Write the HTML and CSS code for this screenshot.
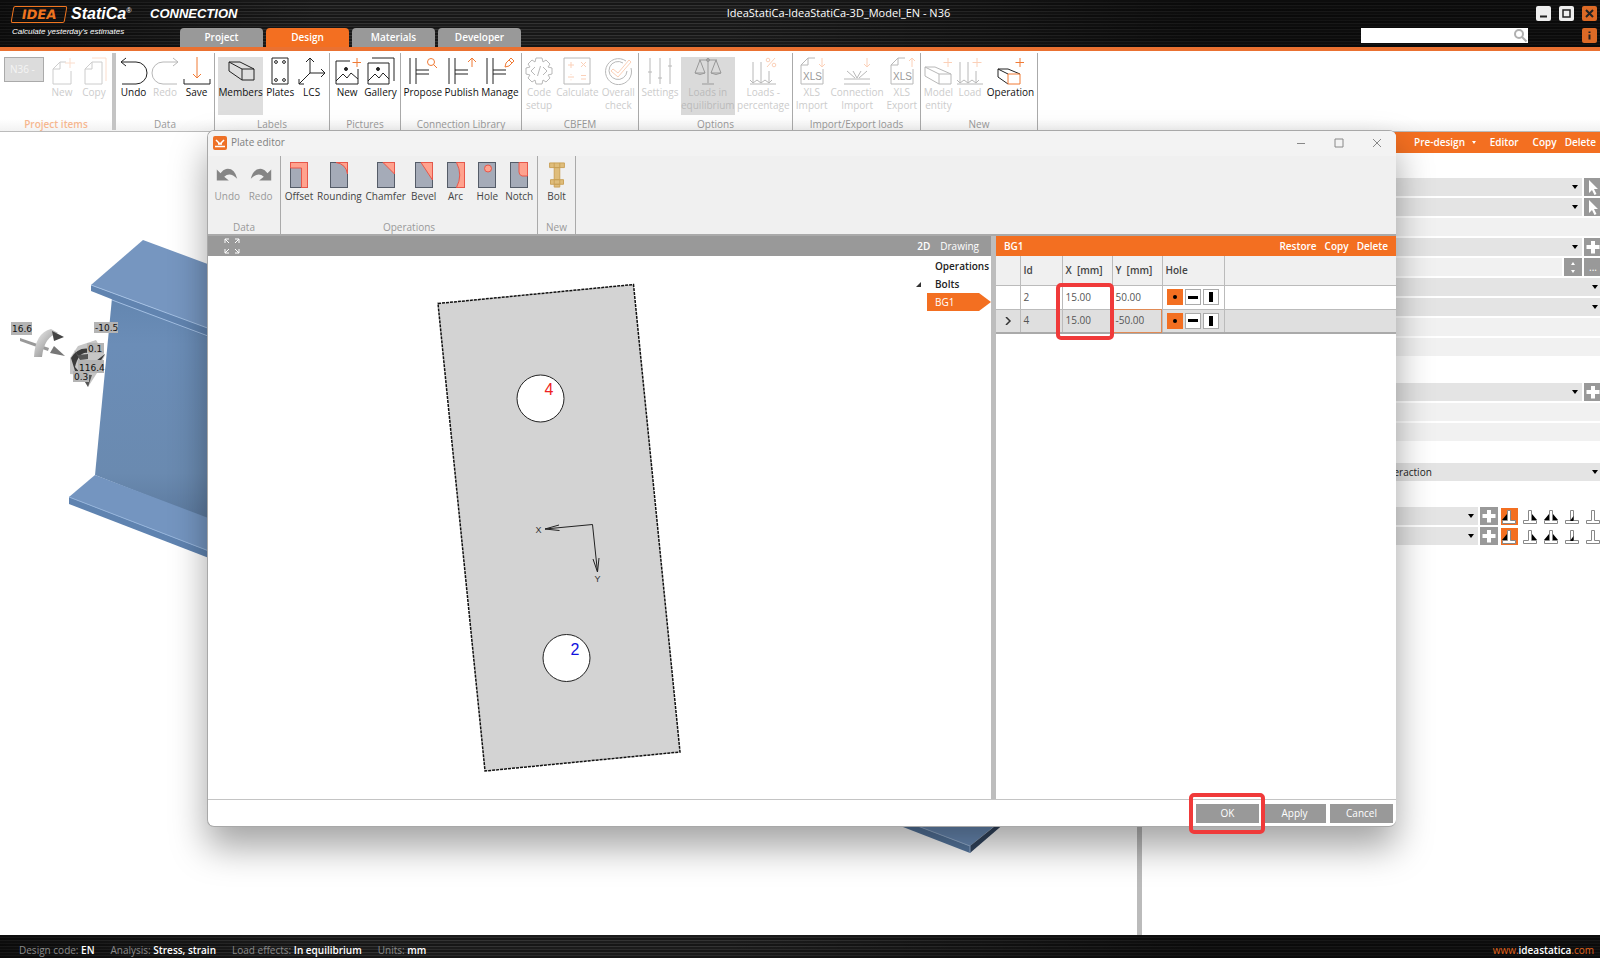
FILE: index.html
```html
<!DOCTYPE html>
<html lang="en">
<head>
    <meta charset="UTF-8">
    <meta name="viewport" content="width=device-width, initial-scale=1.0">
    <title>IDEA StatiCa Connection</title>
    <link rel="stylesheet" href="styles.css">
</head>
<body>
    <!-- icon library -->
    <svg class="defs" aria-hidden="true">
        <symbol id="i-page" viewBox="0 0 28 28"><path d="M18 5H12L5 12V27H23V14M12 5V12H5"/><path class="o" d="M22 1V11M17 6H27"/></symbol>
        <symbol id="i-copy" viewBox="0 0 28 28"><path d="M22 5H12L5 12V27H22ZM12 5V12H5"/><path class="o" d="M12 1H26V24"/></symbol>
        <symbol id="i-undo" viewBox="0 0 28 28"><path d="M1 5H16A11 11 0 0 1 16 27H2M6 1L1 5L6 9"/></symbol>
        <symbol id="i-redo" viewBox="0 0 28 28"><path d="M27 5H12A11 11 0 0 0 12 27H26M22 1L27 5L22 9"/></symbol>
        <symbol id="i-save" viewBox="0 0 28 28"><path d="M1 22V27H27V22"/><path class="o" d="M14 0V21M10 17L14 21L18 17"/></symbol>
        <symbol id="i-member" viewBox="0 0 28 28"><path d="M2 5H13L27 12V23H15L2 14ZM2 5L15 12H27M15 12V23"/></symbol>
        <symbol id="i-plates" viewBox="0 0 28 28"><path d="M6 1H22V27H6Z"/><circle cx="10" cy="5" r="1.4"/><circle cx="18" cy="5" r="1.4"/><circle cx="10" cy="23" r="1.4"/><circle cx="18" cy="23" r="1.4"/></symbol>
        <symbol id="i-lcs" viewBox="0 0 28 28"><path d="M12 1V16H27M12 16L1 27M8 5L12 1L16 5M23 12L27 16L23 20M1 22V27H6"/></symbol>
        <symbol id="i-picture" viewBox="0 0 28 28"><path d="M17 4H3V27H25V12M3 24L10 17L14 21L18 16L25 22"/><circle class="f" cx="13" cy="12" r="1.5"/><path class="o" d="M24 1V10M19.500 5.500H28.500"/></symbol>
        <symbol id="i-gallery" viewBox="0 0 28 28"><path d="M1 6H22V27H1ZM1 24L8 17L12 21L16 16L22 22M5 1H27V24"/><circle class="f" cx="11" cy="12" r="1.500"/></symbol>
        <symbol id="i-propose" viewBox="0 0 28 28"><path d="M1 1V27M7 1V27M7 13H20M7 17H20"/><circle class="o" cx="22" cy="5" r="3.500"/><path class="o" d="M24.500 7.500L28 11"/></symbol>
        <symbol id="i-publish" viewBox="0 0 28 28"><path d="M1 1V27M7 1V27M7 13H20M7 17H20"/><path class="o" d="M24 10V1M20 5L24 1L28 5"/></symbol>
        <symbol id="i-manage" viewBox="0 0 28 28"><path d="M1 1V27M7 1V27M7 13H20M7 17H20"/><path class="o" d="M19 10L20 6L25 1L28 4L23 9ZM23 3L26 6"/></symbol>
        <symbol id="i-code" viewBox="0 0 28 28"><path d="M11 1H17L18 5L21 3L25 7L23 10L27 11V17L23 18L25 21L21 25L18 23L17 27H11L10 23L7 25L3 21L5 18L1 17V11L5 10L3 7L7 3L10 5ZM10 10L6 14L10 18M18 10L22 14L18 18M15.500 9L12.500 19"/></symbol>
        <symbol id="i-calc" viewBox="0 0 28 28"><path d="M1 1H27V27H1Z"/><path class="o" d="M8 5V11M5 8H11M18 5L23 10M23 5L18 10M5 20H11M8 17V17.800M8 22.500V23.300M18 18.500H23M18 22H23"/></symbol>
        <symbol id="i-check" viewBox="0 0 28 28"><path d="M22 4A13 13 0 1 0 27 11M19 6A9 9 0 1 0 23 14"/><path class="o" d="M9 12L14 16L25 3L27 5L14 20L7 14Z"/></symbol>
        <symbol id="i-settings" viewBox="0 0 28 28"><path d="M4 1V27M14 1V27M24 1V27M2 15H6M12 21H16M22 9H26"/></symbol>
        <symbol id="i-scale" viewBox="0 0 28 28"><path d="M14 1V26M8 27H20M5 3H23M6 3L1 16H11ZM22 3L17 16H27ZM1 16Q6 19 11 16M17 16Q22 19 27 16"/><circle cx="14" cy="3" r="1.500"/></symbol>
        <symbol id="i-percent" viewBox="0 0 28 28"><path d="M4 5V26M12 5V26M20 14V26M1 27H27M1 23L4 26L8 23L12 26L16 23L20 26L23 23"/><path class="o" d="M18 10L26 1"/><circle class="o" cx="19" cy="3" r="1.800"/><circle class="o" cx="25" cy="8" r="1.800"/></symbol>
        <symbol id="i-xls-in" viewBox="0 0 28 28"><path d="M17 1H10L3 8V27H25V12M10 1V8H3"/><text x="5" y="23">XLS</text><path class="o" d="M24 1V10M21 7L24 10L27 7"/></symbol>
        <symbol id="i-xls-out" viewBox="0 0 28 28"><path d="M17 1H10L3 8V27H25V12M10 1V8H3"/><text x="5" y="23">XLS</text><path class="o" d="M24 10V1M21 4L24 1L27 4"/></symbol>
        <symbol id="i-joint" viewBox="0 0 28 28"><path d="M1 22H27M1 27H27M4 14L12 21M10 14L14 21L18 14M24 14L16 21"/><path class="o" d="M24 1V10M21 7L24 10L27 7"/></symbol>
        <symbol id="i-entity" viewBox="0 0 28 28"><path d="M1 10H11L27 17V27H15L1 19ZM1 10L15 17H27M15 17V27"/><path class="o" d="M24 1V10M19.500 5.500H28.500"/></symbol>
        <symbol id="i-load" viewBox="0 0 28 28"><path d="M4 5V26M12 5V26M20 14V26M1 27H27M1 23L4 26L8 23L12 26L16 23L20 26L23 23"/><path class="o" d="M21 1V10M16.500 5.500H25.500"/></symbol>
        <symbol id="i-oper" viewBox="0 0 28 28"><path d="M2 12H12L24 17M2 12V20L12 27M2 12L12 17"/><path class="o" d="M12 17H24V27H12ZM24 1V10M19.500 5.500H28.500"/></symbol>

        <symbol id="i-arrow" viewBox="0 0 24 28"><path d="M1 8V20H14L9 16Q15 10 23 18Q20 6 11 7.500Q8 8 5 12Z" fill="#858585"/></symbol>
        <symbol id="i-cursor" viewBox="0 0 18 18"><path d="M5 2V15L8 12L10.500 17L12.500 16L10 11H14Z" fill="#fff"/></symbol>
        <symbol id="i-plus" viewBox="0 0 18 18"><path d="M7 3H11V7H15.500V11H11V15.500H7V11H2.500V7H7Z" fill="#fff"/></symbol>
        <symbol id="w-none" viewBox="0 0 16 16"><path d="M6.500 1.500H9.500V11.500H14.500V14.500H1.500V11.500H6.500Z" fill="#fff" stroke="#888"/></symbol>
        <symbol id="w-left" viewBox="0 0 16 16"><path d="M6 5V11H1Z" fill="#000"/><use href="#w-none"/></symbol>
        <symbol id="w-right" viewBox="0 0 16 16"><path d="M10 5V11H15Z" fill="#000"/><use href="#w-none"/></symbol>
        <symbol id="w-both" viewBox="0 0 16 16"><path d="M10 5V11H15ZM6 5V11H1Z" fill="#000"/><use href="#w-none"/></symbol>
        <symbol id="w-butt" viewBox="0 0 16 16"><use href="#w-none"/><path d="M9.500 7V12H6Z" fill="#000"/></symbol>
    </svg>

    <header class="topbar">
        <div class="brand">
            <div class="logo"><span class="logo-idea">IDEA</span><span class="logo-name">StatiCa<sup>®</sup></span><span class="logo-app">CONNECTION</span></div>
            <div class="tagline">Calculate yesterday's estimates</div>
        </div>
        <nav class="tabs">
            <button>Project</button>
            <button class="active">Design</button>
            <button>Materials</button>
            <button>Developer</button>
        </nav>
        <h1>IdeaStatiCa-IdeaStatiCa-3D_Model_EN - N36</h1>
        <div class="topbar-right">
            <div class="win-buttons">
                <button aria-label="Minimize"><svg viewBox="0 0 15 15"><path d="M4 10.500H11" stroke="#222" stroke-width="2"/></svg></button>
                <button aria-label="Maximize"><svg viewBox="0 0 15 15"><path d="M4 4H11V11H4Z" fill="none" stroke="#222" stroke-width="1.500"/></svg></button>
                <button class="orange" aria-label="Close"><svg viewBox="0 0 15 15"><path d="M4 4L11 11M11 4L4 11" stroke="#222" stroke-width="2"/></svg></button>
            </div>
            <div class="search-row">
                <div class="search">
                    <input type="text" aria-label="Search">
                    <svg viewBox="0 0 15 15"><circle cx="6" cy="6" r="4" fill="none" stroke="#b0b0b0" stroke-width="2"/><path d="M9 9L13.500 13.500" stroke="#b0b0b0" stroke-width="2"/></svg>
                </div>
                <button class="orange" aria-label="Info"><svg viewBox="0 0 15 15"><path d="M6.500 3.500H8.500V5H6.500ZM6.500 6.500H8.500V11.500H6.500Z" fill="#222"/></svg></button>
            </div>
        </div>
    </header>

    <div class="ribbon">
        <section class="group g-project">
            <div class="tools">
                <select class="item-select" aria-label="Project item" disabled><option>N36 -</option></select>
                <button disabled><svg><use href="#i-page"/></svg>New</button>
                <button disabled><svg><use href="#i-copy"/></svg>Copy</button>
            </div>
            <h2>Project items</h2>
        </section>
        <section class="group g-data">
            <div class="tools">
                <button><svg><use href="#i-undo"/></svg>Undo</button>
                <button disabled><svg><use href="#i-redo"/></svg>Redo</button>
                <button><svg><use href="#i-save"/></svg>Save</button>
            </div>
            <h2>Data</h2>
        </section>
        <section class="group g-labels">
            <div class="tools">
                <button class="on"><svg><use href="#i-member"/></svg>Members</button>
                <button><svg><use href="#i-plates"/></svg>Plates</button>
                <button><svg><use href="#i-lcs"/></svg>LCS</button>
            </div>
            <h2>Labels</h2>
        </section>
        <section class="group g-pictures">
            <div class="tools">
                <button><svg><use href="#i-picture"/></svg>New</button>
                <button><svg><use href="#i-gallery"/></svg>Gallery</button>
            </div>
            <h2>Pictures</h2>
        </section>
        <section class="group g-library">
            <div class="tools">
                <button><svg><use href="#i-propose"/></svg>Propose</button>
                <button><svg><use href="#i-publish"/></svg>Publish</button>
                <button><svg><use href="#i-manage"/></svg>Manage</button>
            </div>
            <h2>Connection Library</h2>
        </section>
        <section class="group g-cbfem">
            <div class="tools">
                <button disabled><svg><use href="#i-code"/></svg>Code<br>setup</button>
                <button disabled><svg><use href="#i-calc"/></svg>Calculate</button>
                <button disabled><svg><use href="#i-check"/></svg>Overall<br>check</button>
            </div>
            <h2>CBFEM</h2>
        </section>
        <section class="group g-options">
            <div class="tools">
                <button disabled><svg><use href="#i-settings"/></svg>Settings</button>
                <button class="on" disabled><svg><use href="#i-scale"/></svg>Loads in<br>equilibrium</button>
                <button disabled><svg><use href="#i-percent"/></svg>Loads -<br>percentage</button>
            </div>
            <h2>Options</h2>
        </section>
        <section class="group g-import">
            <div class="tools">
                <button disabled><svg><use href="#i-xls-in"/></svg>XLS<br>Import</button>
                <button disabled><svg><use href="#i-joint"/></svg>Connection<br>Import</button>
                <button disabled><svg><use href="#i-xls-out"/></svg>XLS<br>Export</button>
            </div>
            <h2>Import/Export loads</h2>
        </section>
        <section class="group g-new">
            <div class="tools">
                <button disabled><svg><use href="#i-entity"/></svg>Model<br>entity</button>
                <button disabled><svg><use href="#i-load"/></svg>Load</button>
                <button><svg><use href="#i-oper"/></svg>Operation</button>
            </div>
            <h2>New</h2>
        </section>
    </div>

    <main>
        <!-- 3D view of the joint -->
        <svg class="scene" viewBox="0 132 1137 803" preserveAspectRatio="xMinYMin slice">
            <defs>
                <linearGradient id="web" x1="0" y1="0" x2="0" y2="1">
                    <stop offset="0" stop-color="#6386b0"/>
                    <stop offset=".2" stop-color="#6b8db7"/>
                    <stop offset=".75" stop-color="#6a8ab0"/>
                    <stop offset="1" stop-color="#587599"/>
                </linearGradient>
                <linearGradient id="metal" x1="0" y1="0" x2="1" y2="1">
                    <stop offset="0" stop-color="#f4f4f4"/>
                    <stop offset="1" stop-color="#777"/>
                </linearGradient>
            </defs>
            <path d="M112 298L95 475L240 532V330Z" fill="url(#web)"/>
            <path d="M91 285L240 340V350L91 291Z" fill="#6184b0"/>
            <path d="M143 240L91 285L240 340V276Z" fill="#7696c0"/>
            <path d="M91 285L240 340M112 300L240 348" fill="none" stroke="#a3bfe2"/>
            <path d="M95 475L69 497L240 563V530Z" fill="#7495c0"/>
            <path d="M69 497V504L240 570V563Z" fill="#5f83b0"/>
            <path d="M69 497L240 563" stroke="#94b3da"/>
            <path d="M902 820L970 846L1002 820Z" fill="#6b8db8"/>
            <path d="M885 820L970 853V846L902 820Z" fill="#56779f"/>
            <path d="M970 846L1000 822H1006L970 853Z" fill="#32455f"/>
            <path d="M902 820L970 846V853" fill="none" stroke="#94b0d2"/>

            <path d="M20 338L49 348L48 351L20 341Z" fill="#999"/>
            <path d="M54 346L65 356L50 353Z" fill="#777"/>
            <path d="M34 357Q35 333 51 329L58 333Q44 337 42 357Z" fill="url(#metal)"/>
            <path d="M52 331L64 337L54 341Z" fill="#444"/>
            <path d="M70 358L78 346L96 340L105 355L97 373L88 387L83 375L70 374Z" fill="#c6c6c6"/>
            <path d="M71 358Q78 346 91 349L88 353Q79 351 75 367Q84 379 96 368L105 354L92 364Q80 376 75 371Z" fill="#3b3b3b"/>
            <path d="M74 350L78 355L88 354V359L80 360ZM80 374L92 375L88 387Z" fill="#555"/>
            <g class="force">
                <path d="M11 322H32V335H11ZM94 322H118V333H94ZM87 343H104V353H87ZM78 360H104V373H78ZM73 371H89V382H73Z" fill="#b4b4b4"/>
                <text x="12" y="332">16.6</text>
                <text x="95" y="331">-10.5</text>
                <text x="88" y="352">0.1</text>
                <text x="79" y="371">116.4</text>
                <text x="74" y="380">0.3</text>
            </g>
        </svg>

        <aside class="props">
            <div class="props-head">
                <a href="#">Pre-design <i></i></a>
                <a href="#">Editor</a>
                <a href="#">Copy</a>
                <a href="#">Delete</a>
            </div>
            <form class="props-body">
                <div class="row"><div class="drop"><select aria-label="Member 1"></select></div><button type="button" class="sq" aria-label="Pick"><svg><use href="#i-cursor"/></svg></button></div>
                <div class="row"><div class="drop"><select aria-label="Member 2"></select></div><button type="button" class="sq" aria-label="Pick"><svg><use href="#i-cursor"/></svg></button></div>
                <div class="row"><input type="text" aria-label="Location"></div>
                <div class="row"><div class="drop"><select aria-label="Bolts"></select></div><button type="button" class="sq" aria-label="Add"><svg><use href="#i-plus"/></svg></button></div>
                <div class="row"><input type="text" aria-label="Rows"><button type="button" class="sq spin" aria-label="Step"><i></i><i></i></button><button type="button" class="sq dots">...</button></div>
                <div class="row full"><div class="drop"><select aria-label="Plate"></select></div></div>
                <div class="row full"><div class="drop"><select aria-label="Side"></select></div></div>
                <div class="row"><input type="text" aria-label="Width"></div>
                <div class="row"><input type="text" aria-label="Height"></div>

                <div class="row section"><div class="drop"><select aria-label="Type"></select></div><button type="button" class="sq" aria-label="Add"><svg><use href="#i-plus"/></svg></button></div>
                <div class="row"><input type="text" aria-label="Positions"></div>
                <div class="row"><input type="text" aria-label="Offset"></div>

                <div class="row full section-2"><div class="drop"><select aria-label="Shear force transfer"><option>Interaction</option></select></div></div>

                <div class="row weld section-3">
                    <div class="drop"><select aria-label="Weld 1"></select></div>
                    <button type="button" class="sq" aria-label="Add"><svg><use href="#i-plus"/></svg></button>
                    <div class="welds">
                        <button type="button" class="on" aria-label="Left"><svg><use href="#w-left"/></svg></button>
                        <button type="button" aria-label="Right"><svg><use href="#w-right"/></svg></button>
                        <button type="button" aria-label="Both"><svg><use href="#w-both"/></svg></button>
                        <button type="button" aria-label="Butt"><svg><use href="#w-butt"/></svg></button>
                        <button type="button" aria-label="None"><svg><use href="#w-none"/></svg></button>
                    </div>
                </div>
                <div class="row weld">
                    <div class="drop"><select aria-label="Weld 2"></select></div>
                    <button type="button" class="sq" aria-label="Add"><svg><use href="#i-plus"/></svg></button>
                    <div class="welds">
                        <button type="button" class="on" aria-label="Left"><svg><use href="#w-left"/></svg></button>
                        <button type="button" aria-label="Right"><svg><use href="#w-right"/></svg></button>
                        <button type="button" aria-label="Both"><svg><use href="#w-both"/></svg></button>
                        <button type="button" aria-label="Butt"><svg><use href="#w-butt"/></svg></button>
                        <button type="button" aria-label="None"><svg><use href="#w-none"/></svg></button>
                    </div>
                </div>
            </form>
        </aside>
    </main>

    <footer class="status">
        <span>Design code: <b>EN</b></span>
        <span>Analysis: <b>Stress, strain</b></span>
        <span>Load effects: <b>In equilibrium</b></span>
        <span>Units: <b>mm</b></span>
        <a href="#">www.<b>ideastatica</b>.com</a>
    </footer>

    <!-- plate editor window -->
    <div class="dialog" role="dialog" aria-label="Plate editor">
        <div class="dialog-title">
            <svg class="app-icon" viewBox="0 0 14 14"><rect width="14" height="14" rx="2" fill="#ee7127"/><path d="M2 10.500H12M3 4L7 8L11 4M5 8H9" fill="none" stroke="#fff" stroke-width="1.500"/></svg>
            <span>Plate editor</span>
            <div class="dialog-win">
                <button aria-label="Minimize"><svg viewBox="0 0 10 10"><path d="M1 5.500H9"/></svg></button>
                <button aria-label="Maximize"><svg viewBox="0 0 10 10"><path d="M1 1H9V9H1Z"/></svg></button>
                <button aria-label="Close"><svg viewBox="0 0 10 10"><path d="M1 1L9 9M9 1L1 9"/></svg></button>
            </div>
        </div>

        <div class="edit-ribbon">
            <section class="group e-data">
                <div class="tools">
                    <button disabled><svg><use href="#i-arrow"/></svg>Undo</button>
                    <button disabled><svg class="flip"><use href="#i-arrow"/></svg>Redo</button>
                </div>
                <h2>Data</h2>
            </section>
            <section class="group e-ops">
                <div class="tools">
                    <button><svg viewBox="0 0 18 26"><rect class="p" x=".5" y=".5" width="17" height="25"/><path class="c" d="M.5 .5H17.500V25.500H11.500V6H.5Z"/></svg>Offset</button>
                    <button><svg viewBox="0 0 18 26"><rect class="p" x=".5" y=".5" width="17" height="25"/><path class="c" d="M6 .5H17.500V12Q16 2 6 .5Z"/></svg>Rounding</button>
                    <button><svg viewBox="0 0 18 26"><rect class="p" x=".5" y=".5" width="17" height="25"/><path class="c" d="M6 .5H17.500V12Z"/></svg>Chamfer</button>
                    <button><svg viewBox="0 0 18 26"><rect class="p" x=".5" y=".5" width="17" height="25"/><path class="c" d="M6 .5H17.500V18Z"/></svg>Bevel</button>
                    <button><svg viewBox="0 0 18 26"><rect class="p" x=".5" y=".5" width="17" height="25"/><path class="c" d="M9.500 .5H17.500V25.500H9.500Q16 13 9.500 .5Z"/></svg>Arc</button>
                    <button><svg viewBox="0 0 18 26"><rect class="p" x=".5" y=".5" width="17" height="25"/><circle class="c" cx="10" cy="6.500" r="3.500"/></svg>Hole</button>
                    <button><svg viewBox="0 0 18 26"><rect class="p" x=".5" y=".5" width="17" height="25"/><path class="c" d="M9 .5H17.500V14H12Q9 13 9 10Z"/></svg>Notch</button>
                </div>
                <h2>Operations</h2>
            </section>
            <section class="group e-new">
                <div class="tools">
                    <button><svg viewBox="0 0 18 28"><path d="M1 1H17V6H1ZM6 6H12V19H6ZM2 19H16V24H2ZM6 24H12V27H6Z" fill="#dfbd7b" stroke="#c9a055"/><path d="M6 1V6M12 1V6M6 19V24M12 19V24" stroke="#c9a055"/></svg>Bolt</button>
                </div>
                <h2>New</h2>
            </section>
        </div>

        <div class="dialog-body">
            <div class="view">
                <div class="bar gray">
                    <button class="expand" aria-label="Zoom all"><svg viewBox="0 0 16 16"><path d="M1 5V1H5M1 1L5 5M11 1H15V5M15 1L11 5M1 11V15H5M1 15L5 11M11 15H15V11M15 15L11 11"/></svg></button>
                    <button class="mode"><b>2D</b></button>
                    <button class="mode">Drawing</button>
                </div>
                <div class="view-area">
                    <svg class="plate" viewBox="208 256 782 543" preserveAspectRatio="xMidYMid meet">
                        <path class="outline" d="M437.500 303.500L633 284.500L679.500 752L484.500 771Z"/>
                        <circle cx="540" cy="398.500" r="23.500"/>
                        <circle cx="566" cy="658" r="23.500"/>
                        <path class="axis" d="M544.500 529L592 524.500L597 572M558.500 525L544.500 529L559 530.500M592.500 559L597 572L598.500 558"/>
                        <text class="num red" x="544" y="395">4</text>
                        <text class="num blue" x="570" y="655">2</text>
                        <text class="ax" x="535" y="533">X</text>
                        <text class="ax" x="594" y="582">Y</text>
                    </svg>
                    <ul class="tree">
                        <li>Operations</li>
                        <li class="open">Bolts</li>
                        <li class="leaf"><a href="#">BG1</a></li>
                    </ul>
                </div>
            </div>

            <div class="detail">
                <div class="bar">
                    <b>BG1</b>
                    <div class="bar-links">
                        <a href="#">Restore</a>
                        <a href="#">Copy</a>
                        <a href="#">Delete</a>
                    </div>
                </div>
                <table>
                    <colgroup><col class="c-mark"><col class="c-id"><col class="c-num"><col class="c-num"><col class="c-hole"><col></colgroup>
                    <thead>
                        <tr><th></th><th>Id</th><th>X&nbsp; [mm]</th><th>Y&nbsp; [mm]</th><th>Hole</th><th></th></tr>
                    </thead>
                    <tbody>
                        <tr>
                            <td></td><td>2</td><td class="marked">15.00<span class="callout"></span></td><td>50.00</td>
                            <td><div class="holes"><button class="on" aria-label="Circle"><i class="dot"></i></button><button aria-label="Horizontal slot"><i class="hor"></i></button><button aria-label="Vertical slot"><i class="ver"></i></button></div></td><td></td>
                        </tr>
                        <tr class="current">
                            <td class="mark"><svg viewBox="0 0 8 8"><path d="M2 0L6 4L2 8" fill="none" stroke="#333" stroke-width="1.500"/></svg></td><td>4</td><td>15.00</td><td class="edit">-50.00</td>
                            <td><div class="holes"><button class="on" aria-label="Circle"><i class="dot"></i></button><button aria-label="Horizontal slot"><i class="hor"></i></button><button aria-label="Vertical slot"><i class="ver"></i></button></div></td><td></td>
                        </tr>
                    </tbody>
                </table>
            </div>
        </div>

        <div class="dialog-foot">
            <div class="ok-wrap"><button>OK</button><span class="callout"></span></div>
            <button>Apply</button>
            <button>Cancel</button>
        </div>
    </div>
</body>
</html>
```

FILE: styles.css
```css
* {
    box-sizing: border-box;
}

body {
    --accent: #f07a35;
    margin: 0;
    height: 100vh;
    display: flex;
    flex-direction: column;
    position: relative;
    overflow: hidden;
    background: #fff;
    color: #222;
    font-family: "Open Sans", "Noto Sans", sans-serif;
    font-size: 10px;
    line-height: 13px;
}

button,
input,
select {
    font: inherit;
    color: inherit;
    margin: 0;
    padding: 0;
    border: 0;
    border-radius: 0;
    background: none;
}

a {
    color: inherit;
    text-decoration: none;
}

b,
th {
    font-weight: 600;
}

svg {
    display: block;
}

.defs {
    position: absolute;
    width: 0;
    height: 0;
}

/* top bar */
.topbar,
.status {
    background:
        linear-gradient(90deg, #0008, #0000 20%, #0000 45%, #0008 75%, #0008),
        repeating-linear-gradient(0deg, #161616 0 2px, #2b2b2b 2px 3px, #1b1b1b 3px 5px, #333 5px 6px);
}

.topbar {
    display: flex;
    align-items: flex-end;
    flex: none;
    height: 51px;
    border-bottom: 4px solid #ea7131;
    position: relative;
}

.brand {
    width: 180px;
    align-self: flex-start;
    padding: 5px 0 0 12px;
    color: #fff;
    white-space: nowrap;
    font-family: "Liberation Sans", Arial, sans-serif;
    font-style: italic;
}

.logo {
    display: flex;
    align-items: center;
    height: 18px;
    font-weight: bold;
    line-height: 18px;
}

.logo span {
    flex: none;
}

.logo .logo-idea {
    width: 54px;
    border: 1px solid #f0751f;
    border-radius: 2px;
    transform: skewX(-10deg);
    color: #f0751f;
    font-family: "DejaVu Sans", sans-serif;
    font-size: 13px;
    line-height: 15px;
    text-align: center;
    font-style: normal;
}

.logo-name {
    width: 84px;
    padding-left: 5px;
    font-size: 16px;
}

.logo-name sup {
    font-size: 7px;
    font-weight: normal;
    vertical-align: 6px;
    line-height: 0;
}

.logo-app {
    font-size: 13px;
}

.tagline {
    font-size: 8px;
    line-height: 18px;
}

.tabs {
    display: flex;
    gap: 3px;
}

.tabs button {
    width: 83px;
    height: 19px;
    border-radius: 4px 4px 0 0;
    background: #999;
    color: #fff;
    font-weight: 600;
}

.tabs .active {
    background: #f36f21;
}

.topbar h1 {
    position: absolute;
    inset: 5px 0 auto 77px;
    margin: 0;
    text-align: center;
    color: #fff;
    font-size: 11px;
    line-height: 16px;
    font-weight: normal;
}

.topbar-right {
    display: flex;
    flex-direction: column;
    align-items: flex-end;
    gap: 7px;
    margin-left: auto;
    padding: 0 3px 4px 0;
    position: relative;
}

.win-buttons {
    display: flex;
    gap: 8px;
}

.topbar-right button {
    width: 15px;
    height: 15px;
    border-radius: 2px;
    background: #eee;
}

.topbar-right button.orange {
    background: #dd6a26;
}

.search-row {
    display: flex;
    gap: 54px;
}

.search {
    display: flex;
    width: 167px;
    height: 15px;
    background: #fff;
}

.search input {
    flex: 1;
    min-width: 0;
}

.search svg {
    width: 15px;
}

/* ribbon */
.ribbon {
    display: flex;
    flex: none;
    height: 81px;
    padding: 2px 0 1px;
    border-bottom: 1px solid #bbb;
    background: linear-gradient(#fff 85%, #f2f2f2);
}

.group {
    display: flex;
    flex-direction: column;
    justify-content: space-between;
    border-right: 1px solid #aaa;
}

.tools {
    display: flex;
    justify-content: space-evenly;
    align-items: flex-start;
    padding-top: 4px;
}

.tools button {
    display: flex;
    flex-direction: column;
    align-items: center;
    gap: 1px;
    min-width: 28px;
    color: #111;
    white-space: nowrap;
}

.group h2 {
    margin: 0;
    text-align: center;
    color: #999;
    font-size: 10px;
    line-height: 13px;
    font-weight: normal;
}

.ribbon .group h2 {
    line-height: 11px;
}

.ribbon svg {
    width: 28px;
    height: 28px;
    overflow: visible;
    fill: none;
    stroke: #222;
    stroke-width: 1;
}

.ribbon button:disabled {
    --accent: #fbd0b8;
    color: #ccc;
}

.ribbon button:disabled svg {
    stroke: #b8b8b8;
}

.ribbon .on {
    height: 58px;
    background: #dedede;
}

.ribbon .on:disabled {
    background: #dadada;
    color: #bbb;
}

.ribbon .on:disabled svg {
    stroke: #999;
}

.o {
    stroke: var(--accent);
}

.f {
    fill: #222;
}

symbol text {
    font-family: "Liberation Sans", Arial, sans-serif;
    font-size: 10px;
    fill: #999;
    stroke: none;
}

.g-project { width: 116px; border-right: 4px solid #c4c4c4; }
.g-data { width: 99px; }
.g-labels { width: 115px; }
.g-pictures { width: 71px; }
.g-library { width: 121px; }
.g-cbfem { width: 117px; }
.g-options { width: 154px; }
.g-import { width: 128px; }
.g-new { width: 117px; }

.g-project svg {
    opacity: 0.7;
}

.g-project h2 {
    color: #f6b78f;
    font-weight: 600;
}

.item-select {
    appearance: none;
    width: 40px;
    height: 25px;
    padding-left: 5px;
    border: 1px solid #aaa;
    background: #dcdcdc;
    color: #f4f4f4;
    opacity: 1;
}

/* main area */
main {
    display: flex;
    flex: 1;
    min-height: 0;
}

.scene {
    flex: 1;
    min-width: 0;
    height: 100%;
}

.force text {
    font-family: "DejaVu Sans", sans-serif;
    font-size: 9px;
    fill: #111;
}

.props {
    width: 463px;
    border-left: 5px solid #bbb;
}

.props-head {
    display: flex;
    justify-content: flex-end;
    gap: 8px;
    height: 21px;
    padding-right: 4px;
    background: #f36f21;
    color: #fff;
    font-weight: 600;
    line-height: 21px;
}

.props-head a:nth-child(-n+2) {
    margin-right: 6px;
}

.props-head i,
.drop::after,
.spin i {
    display: inline-block;
    border: 3px solid transparent;
    border-top: 4px solid;
    border-bottom: 0;
}

.props-head i {
    border-width: 3px 2px 0;
    margin: 0 0 2px 4px;
}

.props-body {
    display: flex;
    flex-direction: column;
    gap: 2px;
    padding: 25px 0 0 239px;
}

.row {
    display: flex;
    gap: 2px;
    height: 18px;
    margin-right: -2px;
}

.row > input {
    flex: 1;
    min-width: 0;
    background: #f1f1f1;
}

.drop {
    flex: 1;
    position: relative;
}

.drop select {
    appearance: none;
    width: 100%;
    height: 18px;
    background: #e4e4e4;
}

.drop::after {
    content: "";
    position: absolute;
    right: 4px;
    top: 7px;
    border-top-color: #000;
}

.full {
    margin-right: 0;
}

.full .drop::after {
    right: 2px;
}

.sq {
    width: 18px;
    height: 18px;
    background: #999;
    color: #fff;
}

.sq svg {
    width: 18px;
    height: 18px;
}

.spin {
    display: flex;
    flex-direction: column;
    align-items: center;
    justify-content: center;
    gap: 5px;
}

.spin i {
    border-width: 3px 2px 0;
}

.spin i:first-child {
    transform: rotate(180deg);
}

.section { margin-top: 25px; }
.section-2 { margin-top: 20px; }
.section-3 { margin-top: 24px; }

.welds {
    display: flex;
    gap: 4px;
    padding-left: 1px;
}

.welds button {
    width: 17px;
    height: 17px;
    margin-top: 1px;
}

.welds svg {
    width: 16px;
    height: 16px;
}

.welds .on {
    background: #f36f21;
}

/* status bar */
.status {
    display: flex;
    align-items: flex-end;
    gap: 16px;
    flex: none;
    height: 23px;
    padding: 0 6px 1px 19px;
    color: #8a8a8a;
    white-space: nowrap;
}

.status span b {
    color: #fff;
}

.status a {
    margin-left: auto;
    color: #e0641c;
}

.status a b {
    color: #fff;
}

/* plate editor */
.dialog {
    position: absolute;
    top: 130px;
    right: 204px;
    bottom: 131px;
    left: 207px;
    display: flex;
    flex-direction: column;
    border: 1px solid #a8a8a8;
    border-right-width: 0;
    border-radius: 7px;
    background: #fff;
    box-shadow: 0 20px 36px rgba(0, 0, 0, 0.36);
}

.dialog-title {
    display: flex;
    align-items: center;
    gap: 4px;
    height: 25px;
    padding: 0 14px 2px 5px;
    border-radius: 6px 6px 0 0;
    background: #f3f3f3;
    color: #808080;
}

.app-icon {
    width: 14px;
    height: 14px;
}

.dialog-win {
    display: flex;
    gap: 28px;
    margin-left: auto;
}

.dialog-win svg {
    width: 10px;
    height: 10px;
    fill: none;
    stroke: #888;
}

.edit-ribbon {
    display: flex;
    height: 80px;
    border-bottom: 2px solid #aaa;
    background: #f0f0f0;
}

.edit-ribbon .tools {
    padding-top: 6px;
}

.edit-ribbon .tools button {
    gap: 2px;
    color: #444;
}

.edit-ribbon .tools button:disabled {
    color: #999;
}

.edit-ribbon svg {
    width: 24px;
    height: 26px;
}

.edit-ribbon .flip {
    transform: scaleX(-1);
}

.p {
    fill: #a5abb8;
    stroke: #555c68;
}

.c {
    fill: #ffa28e;
    stroke: #e8574a;
}

.e-data { width: 73px; }
.e-ops { width: 257px; }
.e-new { width: 38px; }

.dialog-body {
    display: flex;
    flex: 1;
    min-height: 0;
}

.view {
    display: flex;
    flex-direction: column;
    flex: 1;
    min-width: 0;
    border-right: 5px solid #bdbdbd;
}

.bar {
    display: flex;
    align-items: center;
    flex: none;
    height: 20px;
    padding: 0 8px;
    background: #f36f21;
    color: #fff;
}

.bar.gray {
    gap: 10px;
    padding: 0 12px 0 16px;
    background: #999;
}

.expand {
    margin-right: auto;
}

.expand svg {
    width: 16px;
    height: 16px;
    fill: none;
    stroke: #fff;
}

.bar-links {
    display: flex;
    gap: 8px;
    margin-left: auto;
    font-weight: 600;
}

.view-area {
    flex: 1;
    min-height: 0;
    position: relative;
}

.plate {
    width: 100%;
    height: 100%;
}

.outline {
    fill: #d3d3d3;
    stroke: #111;
    stroke-width: 1.5;
    stroke-dasharray: 3 1;
}

.plate circle {
    fill: #fff;
    stroke: #222;
}

.axis {
    fill: none;
    stroke: #222;
}

.plate text {
    font-family: "Liberation Sans", Arial, sans-serif;
}

.num { font-size: 16px; }
.ax { font-size: 9px; fill: #333; }
.red { fill: #e22; }
.blue { fill: #11d; }

.tree {
    position: absolute;
    top: 1px;
    right: 0;
    width: 64px;
    margin: 0;
    padding: 0;
    list-style: none;
    font-weight: 600;
    line-height: 18px;
}

.tree li {
    padding-left: 8px;
}

.tree .open::before {
    content: "";
    float: left;
    margin: 7px 0 0 -19px;
    border-left: 5px solid transparent;
    border-bottom: 5px solid #333;
}

.tree .leaf {
    padding: 0;
}

.tree .leaf a {
    display: block;
    padding-left: 8px;
    background: #f36f21;
    color: #fff;
    font-weight: normal;
    clip-path: polygon(0 0, 52px 0, 100% 50%, 52px 100%, 0 100%);
}

.detail {
    width: 400px;
}

table {
    width: 100%;
    table-layout: fixed;
    border-collapse: collapse;
    color: #555;
}

.c-mark { width: 24px; }
.c-id { width: 42px; }
.c-num { width: 50px; }
.c-hole { width: 62px; }

th,
td {
    height: 24px;
    padding: 0 3px;
    border-right: 1px solid #bbb;
    border-bottom: 1px solid #bbb;
    text-align: left;
    white-space: nowrap;
}

th {
    height: 29px;
    background: #f0f0f0;
    color: #444;
}

th:last-child,
td:last-child {
    border-right: 0;
}

.current {
    background: #dfdfdf;
}

.current td {
    border-bottom: 2px solid #aaa;
}

.mark svg {
    width: 8px;
    height: 8px;
    margin: 0 auto;
}

td.edit {
    outline: 1px solid #e08a55;
    outline-offset: -1px;
}

.marked {
    position: relative;
}

.callout {
    position: absolute;
    border: 4px solid #f03a3a;
    border-radius: 5px;
    pointer-events: none;
    z-index: 1;
}

.marked .callout {
    top: -3px;
    left: -7px;
    width: 58px;
    height: 57px;
}

.holes {
    display: flex;
    gap: 2px;
    padding-left: 1px;
}

.holes button {
    display: flex;
    align-items: center;
    justify-content: center;
    width: 16px;
    height: 16px;
    border: 1px solid #aaa;
    background: #fff;
}

.holes .on {
    border-color: #f36f21;
    background: #f36f21;
}

.holes i {
    background: #000;
}

.dot { width: 4px; height: 4px; border-radius: 2px; }
.hor { width: 10px; height: 3px; }
.ver { width: 4px; height: 10px; }

.dialog-foot {
    display: flex;
    justify-content: flex-end;
    gap: 4px;
    height: 27px;
    padding: 4px 3px 0;
    border-top: 1px solid #c4c4c4;
}

.dialog-foot button {
    width: 63px;
    height: 19px;
    background: #999;
    color: #fff;
}

.ok-wrap {
    position: relative;
}

.ok-wrap .callout {
    inset: -11px -6px auto -7px;
    height: 41px;
}
```
